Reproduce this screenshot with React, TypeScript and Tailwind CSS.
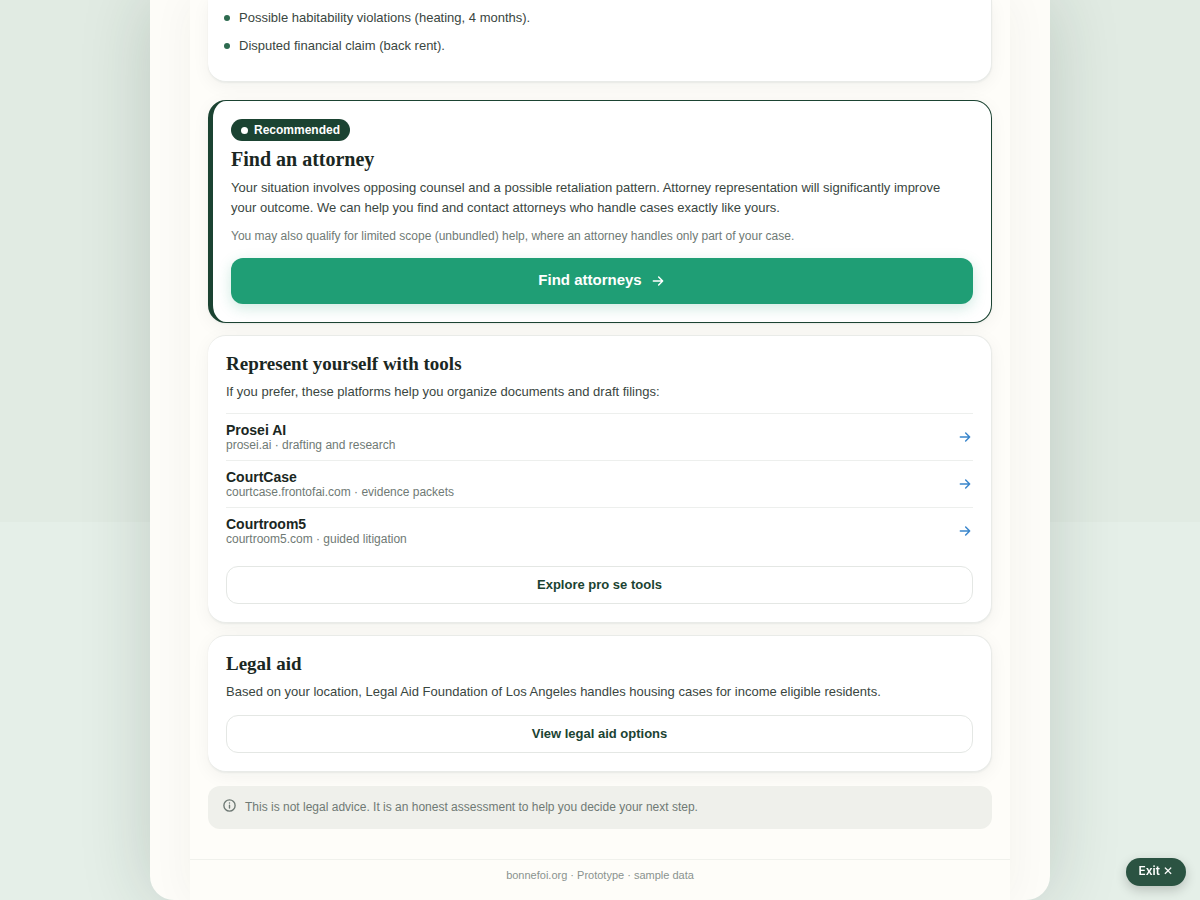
import type { ReactNode } from "react";

const FINDINGS = [
  "Possible habitability violations (heating, 4 months).",
  "Disputed financial claim (back rent).",
];

const TOOLS = [
  { name: "Prosei AI", detail: "prosei.ai · drafting and research" },
  { name: "CourtCase", detail: "courtcase.frontofai.com · evidence packets" },
  { name: "Courtroom5", detail: "courtroom5.com · guided litigation" },
];

const cardShadow = "shadow-[0_1px_2px_rgba(20,40,30,0.06),0_4px_18px_rgba(20,40,30,0.05)]";

function Icon({ className, children }: { className?: string; children: ReactNode }) {
  return (
    <svg
      viewBox="0 0 24 24"
      fill="none"
      stroke="currentColor"
      strokeWidth={2.2}
      strokeLinecap="round"
      strokeLinejoin="round"
      aria-hidden="true"
      className={className}
    >
      {children}
    </svg>
  );
}

function ArrowIcon({ className }: { className?: string }) {
  return (
    <Icon className={className}>
      <path d="M5 12h14M13 6l6 6-6 6" />
    </Icon>
  );
}

function Card({ children }: { children: ReactNode }) {
  return (
    <section
      className={`rounded-[18px] border border-l-0 border-[#e9ebe8] bg-white p-[18px] ${cardShadow}`}
    >
      {children}
    </section>
  );
}

function CardTitle({ children }: { children: ReactNode }) {
  return (
    <h2 className="font-['Liberation_Serif',serif] text-[19px] leading-5 font-bold text-[#1a2722]">
      {children}
    </h2>
  );
}

function OutlineButton({ children }: { children: ReactNode }) {
  return (
    <button
      type="button"
      className="h-[38px] w-full rounded-xl border border-[#e4e7e4] bg-white text-[13px] font-bold text-[#1b4332]"
    >
      {children}
    </button>
  );
}

/** Last part of the case assessment: findings, then the three ways forward. */
export default function App() {
  return (
    <div className="min-h-screen bg-[linear-gradient(#e1ebe3_522px,#e5efe8_522px)] font-['Liberation_Sans',Arial,sans-serif] text-[#3a4641]">
      <div className="mx-auto max-w-[900px] overflow-hidden rounded-b-[24px] bg-[#fdfcf8] shadow-[0_0_70px_rgba(27,50,40,0.18)]">
        <div className="mx-auto max-w-[820px] bg-[#fefdf9] shadow-[0_0_40px_rgba(60,60,20,0.05)]">
          <main className="px-[18px] pb-[30px]">
            <section
              className={`rounded-b-[18px] border-r border-b border-[#e9ebe8] bg-white px-[16px] pt-2 pb-[25px] ${cardShadow}`}
            >
              <ul className="space-y-2">
                {FINDINGS.map((text) => (
                  <li key={text} className="flex items-center gap-[9px] text-[13px] leading-5">
                    <span className="size-1.5 rounded-full bg-[#2d6a4f]" />
                    {text}
                  </li>
                ))}
              </ul>
            </section>

            <section
              className={`mt-[18px] rounded-[18px] border border-l-[5px] border-[#1b4332] bg-white p-[18px] ${cardShadow}`}
            >
              <span className="flex h-[22px] w-fit items-center gap-1.5 rounded-full bg-[#1b4332] px-2.5 text-[12px] font-bold text-white">
                <span className="size-[7px] rounded-full bg-white" />
                Recommended
              </span>
              <h2 className="mt-[7px] font-['Liberation_Serif',serif] text-[20px] leading-[22px] font-bold text-[#1a2722]">
                Find an attorney
              </h2>
              <p className="mt-2 pr-4 text-[13px] leading-5">
                Your situation involves opposing counsel and a possible retaliation pattern. Attorney
                representation will significantly improve your outcome. We can help you find and
                contact attorneys who handle cases exactly like yours.
              </p>
              <p className="mt-2 text-[12px] leading-5 text-[#6f7a75]">
                You may also qualify for limited scope (unbundled) help, where an attorney handles
                only part of your case.
              </p>
              <button
                type="button"
                className="mt-3 flex h-[46px] w-full items-center justify-center gap-2 rounded-xl bg-[#1f9e75] pb-px text-[15px] font-bold text-white shadow-[0_4px_14px_rgba(31,158,117,0.22)]"
              >
                Find attorneys
                <ArrowIcon className="size-4" />
              </button>
            </section>

            <div className="mt-3 space-y-3">
              <Card>
                <CardTitle>Represent yourself with tools</CardTitle>
                <p className="mt-2 text-[13px] leading-5">
                  If you prefer, these platforms help you organize documents and draft filings:
                </p>
                <ul className="mt-[11px]">
                  {TOOLS.map((tool) => (
                    <li key={tool.name} className="border-t border-[#edefed]">
                      <a href="#" className="flex items-center justify-between py-2">
                        <span>
                          <span className="block text-[14px] leading-4 font-bold text-[#1a2722]">
                            {tool.name}
                          </span>
                          <span className="block text-[12px] leading-[14px] text-[#6f7a75]">
                            {tool.detail}
                          </span>
                        </span>
                        <ArrowIcon className="size-4 text-[#3a86cc]" />
                      </a>
                    </li>
                  ))}
                </ul>
                <div className="mt-3">
                  <OutlineButton>Explore pro se tools</OutlineButton>
                </div>
              </Card>

              <Card>
                <CardTitle>Legal aid</CardTitle>
                <p className="mt-2 text-[13px] leading-5">
                  Based on your location, Legal Aid Foundation of Los Angeles handles housing cases
                  for income eligible residents.
                </p>
                <div className="mt-[13px]">
                  <OutlineButton>View legal aid options</OutlineButton>
                </div>
              </Card>
            </div>

            <div className="mt-3.5 flex h-[43px] items-center gap-2 rounded-xl bg-[#eff0eb] px-3.5 pb-0.5 text-[12px] text-[#6f7a75]">
              <Icon className="mb-0.5 size-[15px]">
                <circle cx="12" cy="12" r="9" />
                <path d="M12 11.5v4.5M12 8h.01" />
              </Icon>
              <p>This is not legal advice. It is an honest assessment to help you decide your next step.</p>
            </div>
          </main>

          <footer className="border-t border-[#f0f1ec] pt-[7px] pb-[17px] text-center text-[11px] leading-4 text-[#8a938f]">
            bonnefoi.org · Prototype · sample data
          </footer>
        </div>
      </div>

      <button
        type="button"
        className="fixed right-3.5 bottom-3.5 h-7 rounded-full bg-[#2b5342] px-[13px] pb-0.5 font-['Inter',sans-serif] text-[12px] font-semibold text-white shadow-[0_4px_12px_rgba(0,0,0,0.2)]"
      >
        Exit <span className="font-normal">✕</span>
      </button>
    </div>
  );
}
